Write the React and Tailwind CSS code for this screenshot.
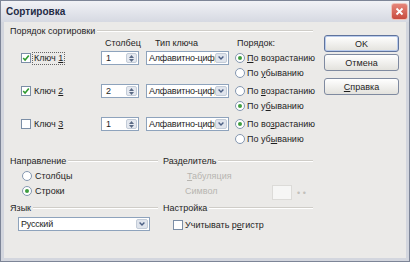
import React from "react";

// Sort dialog, XP-style silver theme, scaled down
const KEYS = [
  {
    n: "1",
    checked: true,
    focus: true,
    col: "1",
    asc: true,
    up: ["", "П", "о возрастанию"],
    down: ["По ", "у", "быванию"],
  },
  {
    n: "2",
    checked: true,
    col: "2",
    asc: false,
    up: ["По ", "в", "озрастанию"],
    down: ["По у", "б", "ыванию"],
  },
  {
    n: "3",
    checked: false,
    col: "1",
    asc: true,
    up: ["По во", "з", "растанию"],
    down: ["По уб", "ы", "ванию"],
  },
];

function Check({ checked }) {
  return (
    <span className="w-[10px] h-[10px] shrink-0 border border-[#7b8ea6] bg-white flex items-center justify-center">
      {checked && (
        <svg width="8" height="8" viewBox="0 0 8 8">
          <path d="M1.2 4 L3.1 6 L6.8 1.6" fill="none" stroke="#2f9b2f" strokeWidth="1.6" />
        </svg>
      )}
    </span>
  );
}

function Radio({ on }) {
  return (
    <span className="w-[10px] h-[10px] shrink-0 rounded-full border border-[#8497b0] bg-white flex items-center justify-center">
      {on && <span className="w-[4px] h-[4px] rounded-full bg-[#3f9d3f]" />}
    </span>
  );
}

function Acc({ parts }) {
  return (
    <span className="whitespace-nowrap">
      {parts[0]}
      <u className="underline-offset-1">{parts[1]}</u>
      {parts[2]}
    </span>
  );
}

function GroupHead({ children }) {
  return (
    <div className="h-[12px] flex items-center gap-[2px]">
      <span className="whitespace-nowrap">{children}</span>
      <div className="flex-1 h-[2px] border-t border-[#cfcdc8] border-b border-b-white" />
    </div>
  );
}

function Spin({ value }) {
  return (
    <div className="w-[38px] h-[14px] border border-[#8ea3bc] bg-white flex">
      <span className="flex-1 pl-[4px] leading-[12px]">{value}</span>
      <div className="w-[11px] my-[1px] mr-[1px] rounded-[2px] bg-[#e4e8ef] border border-[#c3ccd8] flex flex-col items-center justify-center gap-[1px]">
        <svg width="5" height="3" viewBox="0 0 5 3">
          <path d="M0 3 L2.5 0 L5 3 Z" fill="#5a6a85" />
        </svg>
        <svg width="5" height="3" viewBox="0 0 5 3">
          <path d="M0 0 L2.5 3 L5 0 Z" fill="#5a6a85" />
        </svg>
      </div>
    </div>
  );
}

function Combo({ text, width }) {
  return (
    <div className={`${width} h-[14px] border border-[#8ea3bc] bg-white flex`}>
      <span className="flex-1 min-w-0 pl-[2px] leading-[12px] overflow-hidden whitespace-nowrap tracking-[-0.2px]">
        {text}
      </span>
      <div className="w-[12px] shrink-0 my-[1px] mr-[1px] rounded-[2px] bg-[#dfe4ec] border border-[#c3ccd8] flex items-center justify-center">
        <svg width="6" height="4" viewBox="0 0 6 4">
          <path d="M0.6 0.6 L3 3 L5.4 0.6" fill="none" stroke="#4b5f84" strokeWidth="1.4" />
        </svg>
      </div>
    </div>
  );
}

function Button({ children, primary }) {
  return (
    <div
      className={`h-[17px] rounded-[3px] border bg-linear-to-b from-white to-[#e3e2dd] flex items-center justify-center ${
        primary
          ? "border-[#5f739c] shadow-[inset_0_0_0_1px_#b9cbec]"
          : "border-[#7f8aa0]"
      }`}
    >
      {children}
    </div>
  );
}

export default function App() {
  return (
    <div className="w-[410px] h-[262px] flex flex-col bg-[#d3d6de] border border-[#7d8597] font-['Liberation_Sans',Arial,sans-serif] text-[9px] leading-[12px] text-[#1e1e1e] overflow-hidden">
      {/* title bar */}
      <div className="h-[21px] shrink-0 flex items-center justify-between pl-[5px] pr-[1px] bg-linear-to-b from-[#f1f2f6] to-[#d6d9e2]">
        <span className="text-[10px] font-bold text-[#1f2b45]">Сортировка</span>
        <div className="w-[17px] h-[17px] rounded-[3px] border border-[#efc2b9] bg-linear-to-b from-[#e5857a] to-[#c84b3e] flex items-center justify-center">
          <svg width="9" height="9" viewBox="0 0 9 9">
            <path d="M1.5 1.5 L7.5 7.5 M7.5 1.5 L1.5 7.5" stroke="white" strokeWidth="1.8" />
          </svg>
        </div>
      </div>

      {/* body */}
      <div className="flex-1 mx-[3px] mb-[3px] bg-[#ebeae8] flex pt-[3px] pl-[6px]">
        <div className="w-[303px] flex flex-col">
          <GroupHead>Порядок сортировки</GroupHead>

          <div className="h-[12px] flex">
            <div className="w-[91px]" />
            <span className="w-[38px] pl-[4px] whitespace-nowrap">Столбец</span>
            <span className="w-[83px] ml-[7px] pl-[9px] whitespace-nowrap">Тип ключа</span>
            <span className="ml-[6px] pl-[2px]">Порядок:</span>
          </div>

          <div className="mt-[1px] flex flex-col gap-[3px]">
            {KEYS.map((k) => (
              <div key={k.n} className="h-[30px] flex items-start">
                <div className="w-[91px] shrink-0 h-[14px] mt-[1px] pl-[11px] flex items-center gap-[1px]">
                  <Check checked={k.checked} />
                  <span
                    className={`px-[1px] leading-[11px] border border-dotted ${
                      k.focus ? "border-[#666]" : "border-transparent"
                    }`}
                  >
                    Ключ <u className="underline-offset-1">{k.n}</u>
                  </span>
                </div>
                <div className="mt-[1px] shrink-0">
                  <Spin value={k.col} />
                </div>
                <div className="mt-[1px] ml-[7px] shrink-0">
                  <Combo text="Алфавитно-цифровой" width="w-[83px]" />
                </div>
                <div className="ml-[6px] flex flex-col">
                  <div className="h-[15px] flex items-center gap-[2px]">
                    <Radio on={k.asc} />
                    <Acc parts={k.up} />
                  </div>
                  <div className="h-[15px] flex items-center gap-[2px]">
                    <Radio on={!k.asc} />
                    <Acc parts={k.down} />
                  </div>
                </div>
              </div>
            ))}
          </div>

          <div className="mt-[9px] flex">
            <div className="w-[148px] flex flex-col">
              <GroupHead>Направление</GroupHead>
              <div className="mt-[1px] h-[15px] pl-[12px] flex items-center gap-[3px]">
                <Radio on={false} />
                <span>Столбцы</span>
              </div>
              <div className="h-[15px] pl-[12px] flex items-center gap-[3px]">
                <Radio on />
                <span>Строки</span>
              </div>
              <div className="mt-[4px]">
                <GroupHead>Язык</GroupHead>
              </div>
              <div className="mt-[3px] ml-[8px]">
                <Combo text="Русский" width="w-[132px]" />
              </div>
            </div>

            <div className="w-[150px] ml-[5px] flex flex-col">
              <GroupHead>Разделитель</GroupHead>
              <div className="mt-[1px] h-[15px] pl-[24px] flex items-center text-[#b7b5b0]">
                <span>
                  <u className="underline-offset-1">Т</u>абуляция
                </span>
              </div>
              <div className="h-[15px] pl-[22px] flex items-center text-[#b7b5b0]">
                <span>Символ</span>
                <div className="ml-auto mt-[3px] w-[20px] h-[15px] border border-[#dcdbd8] bg-[#f6f6f5]" />
                <span className="ml-[5px] w-[16px] mt-[5px] text-[#c2c0bb] leading-[8px]">• •</span>
              </div>
              <div className="mt-[4px]">
                <GroupHead>Настройка</GroupHead>
              </div>
              <div className="mt-[3px] h-[15px] pl-[10px] flex items-center gap-[2px]">
                <Check checked={false} />
                <span>
                  Учитывать р<u className="underline-offset-1">е</u>гистр
                </span>
              </div>
            </div>
          </div>
        </div>

        <div className="ml-[11px] w-[75px] pt-[10px] flex flex-col">
          <Button primary>OK</Button>
          <div className="mt-[2px]">
            <Button>Отмена</Button>
          </div>
          <div className="mt-[7px]">
            <Button>
              <span>
                <u className="underline-offset-1">С</u>правка
              </span>
            </Button>
          </div>
        </div>
      </div>
    </div>
  );
}
